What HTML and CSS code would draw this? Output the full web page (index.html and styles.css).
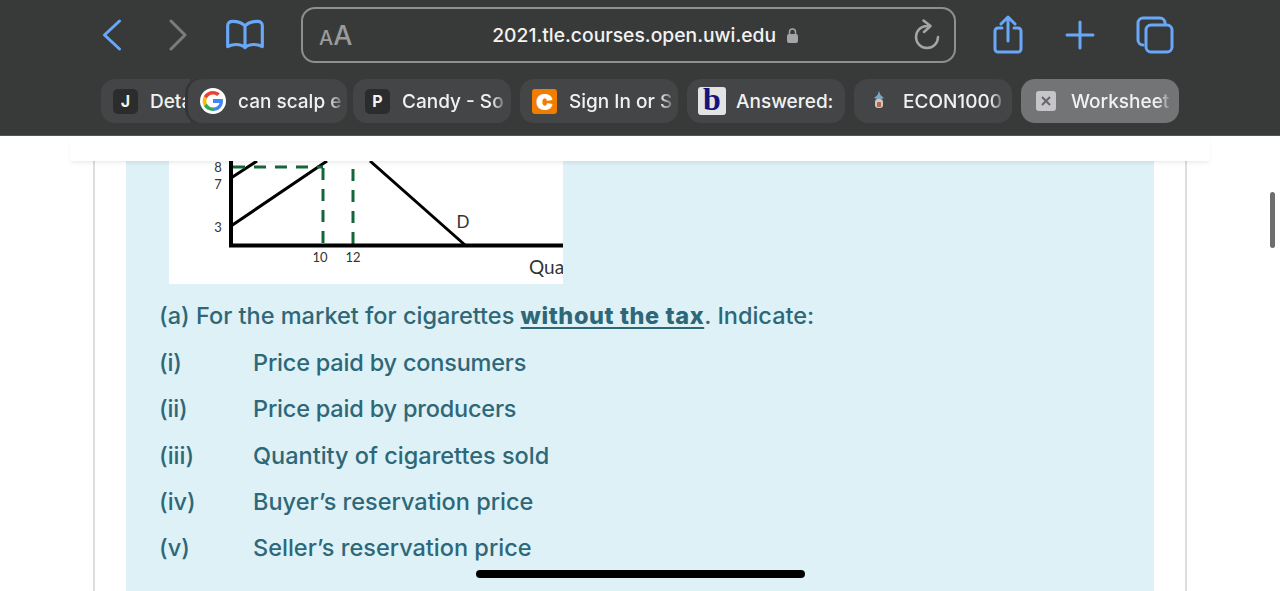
FILE: index.html
```html
<!DOCTYPE html>
<html lang="en">
<head>
    <meta charset="UTF-8">
    <meta name="viewport" content="width=device-width, initial-scale=1.0">
    <title>Worksheet</title>
    <link rel="stylesheet" href="styles.css">
</head>
<body>
    <header class="toolbar">
        <div class="nav-row">
            <div class="nav-left">
                <svg class="icon icon-back" width="22" height="32" viewBox="0 0 22 32"><path d="M18.500 2 3.500 16l15 14"/></svg>
                <svg class="icon icon-forward" width="22" height="32" viewBox="0 0 22 32"><path d="M3 2l14 14L3 30"/></svg>
                <svg class="icon icon-book" width="42" height="34" viewBox="0 0 40 32"><path d="M20 7.500C17 4 13 3 8 3 5.500 3 3.500 4.500 3.500 7v20c3-1.500 5-2 8-2 4 0 6.500.8 8.500 3 2-2.200 4.500-3 8.500-3 3 0 5 .5 8 2V7c0-2.500-2-4-4.500-4-5 0-9 1-12 4.500zM20 7.500V28"/></svg>
            </div>
            <div class="address-bar">
                <span class="text-size"><small>A</small>A</span>
                <span class="url">2021.tle.courses.open.uwi.edu
                    <svg class="lock" width="11" height="15" viewBox="0 0 11 15"><path d="M2.500 6V4a3 3 0 0 1 6 0v2" fill="none" stroke="#a5a5a8" stroke-width="1.500"/><rect y="6" width="11" height="9" rx="2" fill="#a5a5a8"/></svg>
                </span>
                <svg class="reload" width="28" height="32" viewBox="0 0 28 32"><path d="M14 7A11 11 0 1 0 25 18M10.500 1.500l7 5.500-6.500 6"/></svg>
            </div>
            <div class="nav-right">
                <svg class="icon icon-share" width="32" height="40" viewBox="0 0 32 40"><path d="M10 13H6a3 3 0 0 0-3 3v18a3 3 0 0 0 3 3h20a3 3 0 0 0 3-3V16a3 3 0 0 0-3-3h-4M16 26V3M9 9l7-7 7 7"/></svg>
                <svg class="icon icon-plus" width="30" height="30" viewBox="0 0 30 30"><path d="M15 2v26M2 15h26"/></svg>
                <svg class="icon icon-tabs" width="38" height="38" viewBox="0 0 38 38"><path d="M7 29a5 5 0 0 1-5-5V7a5 5 0 0 1 5-5h17a5 5 0 0 1 5 5"/><rect x="10" y="9" width="26" height="27" rx="5"/></svg>
            </div>
        </div>
        <div class="tab-row">
            <div class="tab tab-first"><span class="fav fav-dark">J</span><span class="tab-title tab-title-plain">Deta</span></div>
            <div class="tab tab-over">
                <svg class="fav-google" width="26" height="26" viewBox="0 0 26 26">
                    <circle cx="13" cy="13" r="13" fill="#fff"/>
                    <path d="M13 11v4h6.500c-.6 2.500-3 4.500-6.500 4.500V23c5.800 0 10-4 10-10 0-.7-.1-1.400-.2-2z" fill="#4285f4"/>
                    <path d="M6.800 15.500 3.800 17.800C5.500 21 9 23 13 23v-3.500c-3 0-5.300-1.700-6.200-4z" fill="#34a853"/>
                    <path d="M6.800 15.500a7 7 0 0 1 0-5L3.800 8.200a11 11 0 0 0 0 9.600z" fill="#fbbc05"/>
                    <path d="M13 6.500c1.700 0 3.100.6 4.200 1.600l2.600-2.600C18 3.900 15.700 3 13 3 9 3 5.500 5 3.800 8.200l3 2.300c.9-2.300 3.200-4 6.200-4z" fill="#ea4335"/>
                </svg>
                <span class="tab-title">can scalp e</span>
            </div>
            <div class="tab"><span class="fav fav-dark">P</span><span class="tab-title">Candy - So</span></div>
            <div class="tab"><span class="fav fav-chegg">c</span><span class="tab-title">Sign In or S</span></div>
            <div class="tab"><span class="fav fav-bartleby">b</span><span class="tab-title tab-title-plain">Answered:</span></div>
            <div class="tab">
                <svg class="fav-crest" width="26" height="26" viewBox="0 0 26 26">
                    <path d="M13 3l1.500 4 3.500 3-3 1h-4l-3-1 3.500-3z" fill="#7fa6c4"/>
                    <rect x="9" y="11" width="8" height="9" rx="3" fill="#cfc8c0"/>
                    <rect x="11" y="14" width="4" height="5" rx="1" fill="#b5654a"/>
                </svg>
                <span class="tab-title">ECON1000</span>
            </div>
            <div class="tab tab-active"><span class="fav fav-close"><svg width="10" height="10" viewBox="0 0 10 10"><path d="M1 1l8 8M9 1 1 9"/></svg></span><span class="tab-title">Worksheet</span></div>
        </div>
    </header>

    <div class="sticky-band"></div>

    <main class="page">
        <div class="panel">
            <svg class="chart" width="394" height="123" viewBox="0 0 394 123">
                <g class="chart-lines">
                    <path d="M62 65 158 0M62 17 88 0M201 0 296 84"/>
                </g>
                <g class="chart-dash">
                    <path d="M64 6H154M154 7V84"/>
                    <path d="M184 8V84"/>
                </g>
                <path class="chart-axis" d="M62 0V84.500H394"/>
                <text x="49" y="11" text-anchor="middle">8</text>
                <text x="49" y="28" text-anchor="middle">7</text>
                <text x="49" y="71" text-anchor="middle">3</text>
                <text x="151" y="101" text-anchor="middle">10</text>
                <text x="184" y="101" text-anchor="middle">12</text>
                <text x="294" y="67" text-anchor="middle" class="chart-mid">D</text>
                <text x="360" y="113" class="chart-big">Qua</text>
            </svg>

            <p class="lead">(a) For the market for cigarettes <strong>without the tax</strong>. Indicate:</p>
            <ol class="parts">
                <li class="tight"><span>(i)</span><span>Price paid by consumers</span></li>
                <li class="tight"><span>(ii)</span><span>Price paid by producers</span></li>
                <li><span>(iii)</span><span>Quantity of cigarettes sold</span></li>
                <li><span>(iv)</span><span>Buyer’s reservation price</span></li>
                <li><span>(v)</span><span>Seller’s reservation price</span></li>
            </ol>
        </div>
    </main>

    <div class="scroll-thumb"></div>
    <div class="home-indicator"></div>
</body>
</html>
```

FILE: styles.css
```css
html, body {
    height: 100%;
}
body {
    margin: 0;
    background: #fff;
    font-family: Inter, "Noto Sans", sans-serif;
    overflow: hidden;
    position: relative;
}

/* browser chrome */
.toolbar {
    height: 136px;
    box-sizing: border-box;
    background: #383a3a;
    border-bottom: 1px solid #555;
    padding: 7px 101px 0;
}
.nav-row {
    display: flex;
    align-items: center;
    height: 56px;
}
.nav-left {
    display: flex;
    align-items: center;
    gap: 45px;
    width: 200px;
}
.nav-left .icon-book {
    margin-left: -11px;
}
.icon {
    fill: none;
    stroke: #68a8f7;
    stroke-width: 3;
    stroke-linecap: round;
    stroke-linejoin: round;
    flex: none;
}
.icon-forward {
    stroke: #7b7b7b;
}
.address-bar {
    width: 655px;
    height: 56px;
    box-sizing: border-box;
    border: 2px solid #8e8f8f;
    border-radius: 14px;
    display: flex;
    align-items: center;
    justify-content: space-between;
    padding: 0 13px 0 16px;
    color: #fff;
}
.text-size {
    color: #9a9b9c;
    font-size: 27px;
    font-weight: 500;
}
.text-size small {
    font-size: 20px;
}
.url {
    font-size: 19.300px;
    font-weight: 500;
    color: #f2f2f2;
    display: flex;
    align-items: center;
    gap: 11px;
    margin-left: 25px;
}
.reload {
    fill: none;
    stroke: #a5a5a5;
    stroke-width: 2.500;
    stroke-linecap: round;
    stroke-linejoin: round;
}
.nav-right {
    display: flex;
    align-items: center;
    margin-left: 36px;
    gap: 41px;
}
.tab-row {
    display: flex;
    gap: 9px;
    margin-top: 16px;
    height: 44px;
}
.tab {
    width: 158px;
    height: 44px;
    box-sizing: border-box;
    background: #434546;
    border-radius: 14px;
    padding: 0 8px 0 12px;
    display: flex;
    align-items: center;
    gap: 12px;
    color: #f1f1f1;
    font-size: 19px;
    font-weight: 500;
    flex: none;
}
.tab-first {
    width: 89px;
    padding-right: 0;
    border-radius: 14px 0 0 14px;
}
.tab-over {
    width: 159px;
    margin-left: -11px;
    margin-right: -3px;
    position: relative;
    box-shadow: -3px 0 0 #343636;
}
.tab-active {
    background: #737475;
}
.tab-title {
    white-space: nowrap;
    -webkit-mask-image: linear-gradient(to right, #000 88%, rgba(0,0,0,0.25) 100%);
    mask-image: linear-gradient(to right, #000 88%, rgba(0,0,0,0.25) 100%);
}
.tab-title-plain {
    -webkit-mask-image: none;
    mask-image: none;
}
.fav {
    width: 25px;
    height: 25px;
    border-radius: 5px;
    display: flex;
    align-items: center;
    justify-content: center;
    flex: none;
    font-size: 16px;
    font-weight: 700;
}
.fav-dark {
    background: #2b2c2c;
    color: #f1f1f1;
}
.fav-chegg {
    background: #f07c00;
    color: #fff;
    border-radius: 3px;
    font-size: 29px;
    font-weight: 900;
    line-height: 25px;
    padding-bottom: 4px;
    box-sizing: border-box;
}
.fav-bartleby {
    width: 28px;
    height: 28px;
    margin: 0 -2px 0 -1px;
    background: #e3e3e3;
    color: #14137a;
    border-radius: 3px;
    font-family: "Liberation Serif", serif;
    font-size: 32px;
    line-height: 24px;
    padding-bottom: 4px;
    box-sizing: border-box;
}
.fav-close {
    width: 20px;
    height: 20px;
    margin: 0 3px;
    background: #c5c5ca;
    border-radius: 3px;
}
.fav-close svg {
    fill: none;
    stroke: #66666a;
    stroke-width: 2;
}
.fav-google {
    flex: none;
}
.fav-crest {
    flex: none;
    margin-right: -1px;
}

/* page */
.sticky-band {
    height: 25px;
    margin: 0 70px;
    background: #fff;
    box-shadow: 0 3px 4px -1px rgba(0,0,0,0.08);
    position: relative;
    z-index: 1;
}
.page {
    margin: 0 93px 0 93px;
    padding: 0 31px 0 31px;
    height: 430px;
    border-left: 2px solid #ddd;
    border-right: 2px solid #ddd;
}
.panel {
    background: #def1f7;
    height: 430px;
    padding-left: 33px;
    color: #2e6878;
    font-size: 23.500px;
    font-weight: 500;
}
.chart {
    display: block;
    margin-left: 10px;
    background: #fff;
}
.chart-lines path {
    fill: none;
    stroke: #000;
    stroke-width: 3;
}
.chart-dash path {
    fill: none;
    stroke: #14653a;
    stroke-width: 3;
    stroke-dasharray: 12 9;
}
.chart-axis {
    fill: none;
    stroke: #000;
    stroke-width: 4;
}
.chart text {
    font-family: Lato, sans-serif;
    font-size: 13px;
    font-weight: 400;
    fill: #333;
}
.chart text.chart-mid {
    font-size: 17px;
}
.chart text.chart-big {
    font-size: 19px;
}
.lead {
    margin: 17px 0 0;
    line-height: 30px;
}
.lead strong {
    font-weight: 800;
    letter-spacing: 0.6px;
    text-decoration: underline;
    text-underline-offset: 3px;
}
.parts {
    list-style: none;
    margin: 17px 0 0;
    padding: 0;
    display: flex;
    flex-direction: column;
    gap: 16.300px;
}
.parts li {
    display: grid;
    grid-template-columns: 94px 1fr;
    line-height: 30px;
}
.parts .tight {
    letter-spacing: -0.2px;
}

/* overlays */
.scroll-thumb {
    position: absolute;
    left: 1270px;
    top: 192px;
    width: 5px;
    height: 56px;
    border-radius: 3px;
    background: #6e6e6e;
}
.home-indicator {
    position: absolute;
    left: 476px;
    top: 570px;
    width: 329px;
    height: 8px;
    border-radius: 4px;
    background: #000;
}
```
